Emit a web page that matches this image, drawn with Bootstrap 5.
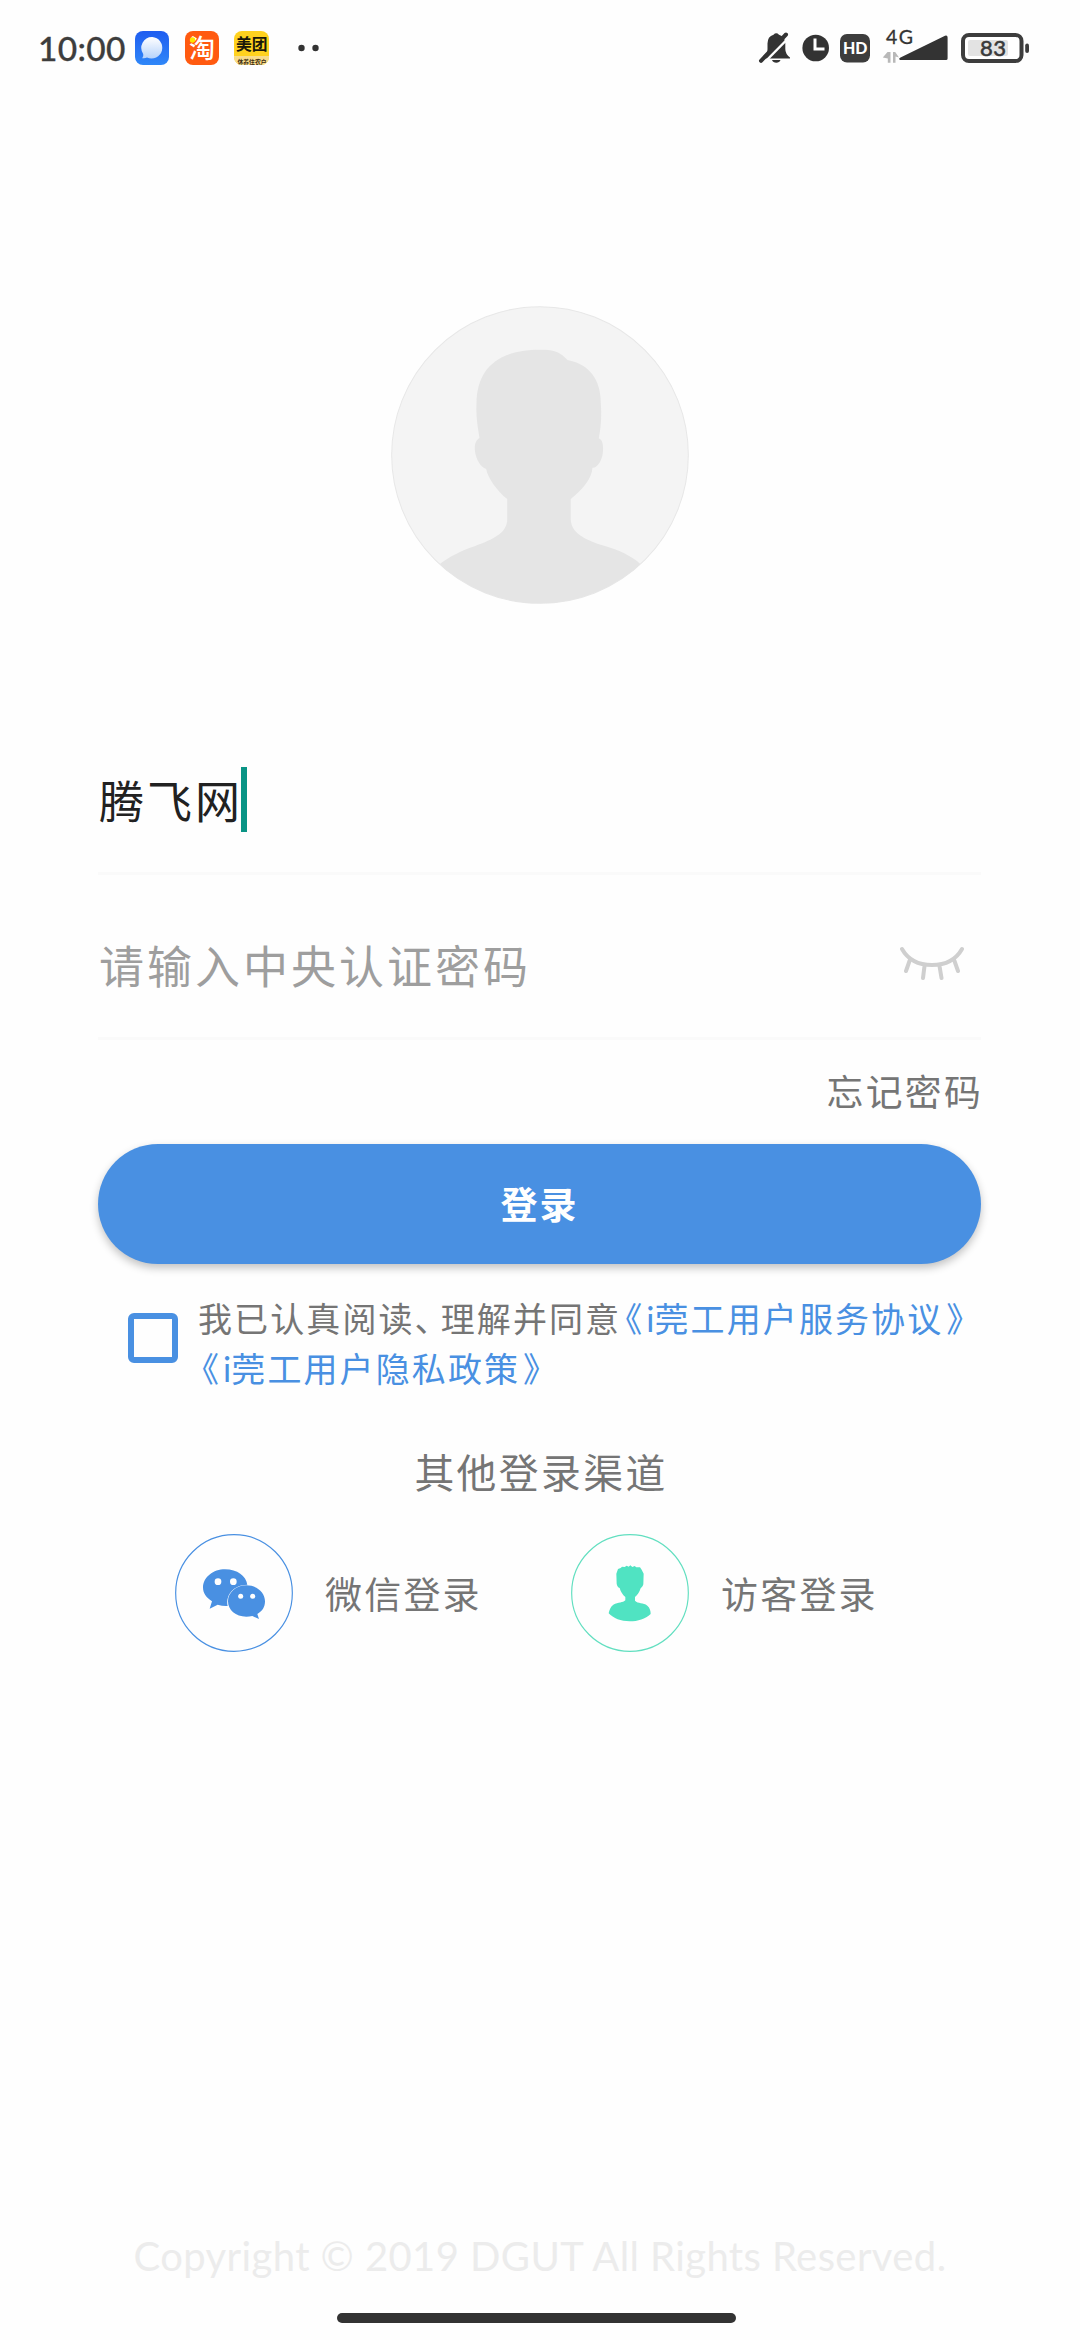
<!DOCTYPE html>
<html lang="zh-CN">
<head>
<meta charset="utf-8">
<meta name="viewport" content="width=device-width, initial-scale=1">
<title>登录</title>
<link rel="stylesheet" href="https://cdn.jsdelivr.net/npm/bootstrap@5.3.0/dist/css/bootstrap.min.css">
<style>
  html, body { height: 100%; }
  body { background: #fefefe; color: #757575; font-family: "Noto Sans CJK SC", sans-serif; overflow: hidden; }
  svg { display: block; flex: none; }
  svg text { font-family: Lato, "Noto Sans CJK SC", sans-serif; }
  .screen { width: 1080px; height: 2340px; }
  .status { height: 96px; padding: 0 51px 0 38px; }
  .clock-time { font: 500 33.5px/44px Lato, sans-serif; width: 97px; color: #3d3d3d; letter-spacing: .3px; -webkit-text-stroke: .3px #3d3d3d; white-space: nowrap; }
  .app-icons { gap: 15.5px; }
  .body-col { width: 883px; margin: 0 99px 0 98px; }
  .portrait { margin: 210px auto 0; width: 298px; }
  .field { height: 165px; border-bottom: 3px solid #fafafa; font-size: 45px; letter-spacing: 3px; padding: 17px 0 0 1px; }
  .field-user { margin-top: 106px; color: #212121; }
  .caret { width: 6px; height: 65px; background: #0a9485; margin-left: -2px; }
  .field input { font-size: 45px; letter-spacing: 3px; line-height: 60px; }
  .field input::placeholder { color: #9e9e9e; opacity: 1; }
  .eye { margin: 0 2px 9px 0; }
  .forgot { height: 104px; font-size: 36.8px; letter-spacing: 2.3px; color: #757575; margin-right: -2px; line-height: 100px; }
  .btn-login { height: 120px; background: #4990e2; color: #fff; font-size: 37px; letter-spacing: 2px; box-shadow: 0 4px 9px rgba(0,0,0,.24); }
  .btn-login:hover { background: #4990e2; color: #fff; }
  .agree { padding: 29px 0 0 30px; height: 134px; }
  .agree .form-check-input { width: 50px; height: 50px; margin: 20px 20px 0 0; border: 6px solid #4990e2; border-radius: 6px; background: transparent; flex: none; }
  .terms { font-size: 34px; letter-spacing: 2.1px; line-height: 49px; white-space: nowrap; }
  .terms a { color: #4990e2; text-decoration: none; }
  .punct { font-feature-settings: "halt"; }
  .comma { margin-right: 7px; }
  .open-q { margin: 0 2px 0 4px; }
  .close-q { margin-left: 3px; }
  .latin-i { font-family: Lato, sans-serif; letter-spacing: 0; }
  .others { font-size: 39.8px; letter-spacing: 2.4px; line-height: 60px; margin: 43px -3px 0 0; }
  .channels { margin-top: 33px; gap: 91px; padding-left: 77px; }
  .channel { gap: 32px; font-size: 37px; letter-spacing: 2.2px; line-height: 60px; width: 305px; white-space: nowrap; }
  .copyright { font: 400 40px/48px Lato, sans-serif; color: #ececec; white-space: nowrap; letter-spacing: .4px; }
  .home-bar { width: 399px; height: 10px; border-radius: 5px; background: #333; margin: 33px 0 17px 337px; }
</style>
</head>
<body>
<div class="screen d-flex flex-column">
  <header class="status d-flex align-items-center justify-content-between">
    <div class="d-flex align-items-center">
      <div class="clock-time">10:00</div>
      <div class="app-icons d-flex align-items-center">
        <svg width="34" height="34" viewBox="0 0 34 34">
          <defs>
            <linearGradient id="blue" x2="0" y2="1"><stop stop-color="#1f5df0"/><stop offset="1" stop-color="#2f87f8"/></linearGradient>
            <linearGradient id="bubble" x2="0" y2="1"><stop stop-color="#fff"/><stop offset="1" stop-color="#b5d2fb"/></linearGradient>
          </defs>
          <rect width="34" height="34" rx="8" fill="url(#blue)"/>
          <path d="M17.2 6A10.8 10.8 0 1 1 12 26.6Q10 27.6 7.2 27.2Q8.8 25.400 8.200 22.900A10.800 10.800 0 0 1 17.200 6Z" fill="url(#bubble)"/>
        </svg>
        <svg width="34" height="34" viewBox="0 0 34 34">
          <rect width="34" height="34" rx="8" fill="#ff5a10"/>
          <text x="4" y="26.500" font-size="26" font-weight="500" fill="#fff">淘</text>
          <circle cx="7.500" cy="9" r="2.700" fill="#ffe600"/>
        </svg>
        <svg width="35" height="34" viewBox="0 0 35 34">
          <clipPath id="tile"><rect width="35" height="34" rx="8"/></clipPath>
          <g clip-path="url(#tile)">
            <rect width="35" height="34" fill="#ffd21f"/>
            <rect y="25" width="35" height="9" fill="#f8dc8a"/>
            <text x="2" y="19" font-size="15.800" font-weight="600" fill="#1b1809">美团</text>
            <text x="3.500" y="32.500" font-size="5.800" font-weight="700" fill="#3a2a10">休养住农户</text>
          </g>
        </svg>
      </div>
      <svg class="ms-4" width="30" height="10" viewBox="0 0 30 10"><g fill="#333"><circle cx="8.500" cy="5" r="3.200"/><circle cx="22.500" cy="5" r="3.200"/></g></svg>
    </div>
    <svg width="272" height="64" viewBox="757 16 272 64" fill="#333">
      <path d="M765 56.500Q767.500 54 767.500 49V43.500Q767.500 36.500 773.500 34.700Q776.200 32 779 34.700Q785 36.500 785.300 43.500V49Q785.300 54 790 57.500V58.500H764ZM772 60H780.500Q779.500 62.800 776.300 62.800T772 60Z"/>
      <path d="M762.500 64.500L789.500 37" stroke="#fefefe" stroke-width="2.400"/>
      <path d="M761 60.800L786 34.500" stroke="#333" stroke-width="4" stroke-linecap="round"/>
      <circle cx="815.700" cy="48" r="13.300"/><path d="M815 38.500V49H824.500" fill="none" stroke="#fff" stroke-width="3"/>
      <rect x="840" y="34" width="30" height="28.500" rx="7" fill="#3d3d3d"/>
      <text x="843" y="54.200" font-size="17" font-weight="900" fill="#fff" textLength="24.500" lengthAdjust="spacingAndGlyphs">HD</text>
      <text x="886" y="43.500" font-size="19.500" textLength="27" stroke="#333" stroke-width=".3">4G</text>
      <path d="M899.500 59.500Q898.500 58.600 900 57.700L945 35.800Q947.600 35 947.600 37.500V58.500Q947.600 60 946 60H900Z"/>
      <path d="M887.500 52H890.500V62.800H887.800V58.500L882.800 57.500ZM893 62.800V52H895.200L899 57.500L895.500 56.500V62.800Z" fill="#b8b8b8"/>
      <rect x="963" y="35" width="58.500" height="26" rx="6" fill="#fff" stroke="#3d3d3d" stroke-width="4"/>
      <rect x="968" y="40" width="40" height="16" rx="2" fill="#e3e3e3"/>
      <rect x="1025.200" y="43.500" width="3.800" height="9.500" rx="1.900" fill="#3d3d3d"/>
      <text x="980" y="56" font-size="22" textLength="26" fill="#3a3a3a" stroke="#3a3a3a" stroke-width=".6">83</text>
    </svg>
  </header>

  <main class="body-col">
    <div class="portrait">
      <svg width="298" height="298" viewBox="62 50 892 892">
        <clipPath id="round"><circle cx="508" cy="496" r="444"/></clipPath>
        <circle cx="508" cy="496" r="444" fill="#f4f4f4" stroke="#e7e7e7" stroke-width="3"/>
        <path clip-path="url(#round)" fill="#e5e5e5" d="M518 181C548 180 572 190 590 212C656 224 690 272 690 340C693 384 690 415 684 446C697 452 698 470 696 490C693 514 680 535 665 534C664 566 634 600 600 628V690C602 730 645 752 700 768C744 780 784 800 808 822L800 960H210V821C238 800 274 782 310 770C370 748 408 730 410 690V628C380 605 350 562 347 538C330 532 316 510 313 482C312 462 316 452 327 445C320 405 316 376 318 340C320 240 378 178 518 181Z"/>
      </svg>
    </div>

    <form>
      <div class="field field-user d-flex align-items-center"><span>腾飞网</span><span class="caret"></span></div>
      <div class="field d-flex align-items-center">
        <input type="text" class="form-control border-0 p-0 bg-transparent shadow-none" placeholder="请输入中央认证密码" aria-label="请输入中央认证密码">
        <svg class="eye" width="80" height="40" viewBox="0 0 80 40" fill="none" stroke="#cfcfcf" stroke-width="4" stroke-linecap="round">
          <path d="M3 9Q12 25 33 25Q54 25 63 9M10.500 21L7 31M25.500 26L24 38M40.500 26L42.500 38M55.500 21L59 31"/>
        </svg>
      </div>
      <div class="forgot text-end">忘记密码</div>
      <button type="button" class="btn btn-login w-100 rounded-pill border-0 fw-bold p-0">登录</button>
      <div class="agree d-flex align-items-start">
        <input class="form-check-input" type="checkbox" aria-label="同意">
        <div class="terms">我已认真阅读<span class="punct comma">、</span>理解并同意<a href="#"><span class="punct open-q">《</span><span class="latin-i">i</span>莞工用户服务协议<span class="punct close-q">》</span></a><br><a href="#"><span class="punct open-q">《</span><span class="latin-i">i</span>莞工用户隐私政策<span class="punct close-q">》</span></a></div>
      </div>
    </form>

    <div class="others text-center">其他登录渠道</div>
    <div class="channels d-flex">
      <div class="channel d-flex align-items-center">
        <svg width="118" height="118" viewBox="75 311 354 354">
          <circle cx="252" cy="488" r="175" fill="none" stroke="#4990e2" stroke-width="3.500"/>
          <path fill="#4990e2" d="M225 417C262 417 288 437 292 463C252 464 226 492 233 527Q218 528 203 523L179 535L186 513C168 502 159 489 159 471C160 440 190 417 225 417Z"/>
          <path fill="#4990e2" d="M289 465C321 465 345 487 345 513C345 530 337 543 322 551L327 566L307 557C266 566 234 544 234 513C234 487 258 465 289 465Z"/>
          <g fill="#fefefe"><circle cx="204" cy="454" r="10"/><circle cx="250" cy="454" r="10"/><circle cx="272" cy="498" r="7.500"/><circle cx="308" cy="498" r="7.500"/></g>
        </svg>
        <span>微信登录</span>
      </div>
      <div class="channel d-flex align-items-center">
        <svg width="118" height="118" viewBox="93 311 354 354">
          <circle cx="270" cy="488" r="175" fill="none" stroke="#62dfc0" stroke-width="3.500"/>
          <path fill="#50e3c2" d="M229 430L234 416L242 413L246 409L254 410L260 406L266 409L271 405L277 410L284 407L289 411L300 411L305 418L311 430L310 462C308 470 305 470 302 474C298 486 293 494 285 500V511C294 521 310 515 322 526C330 533 332 542 332 551C316 566 294 573 269 573C243 573 220 564 206 549C208 539 211 530 220 523C235 515 249 518 256 510V500C248 493 242 485 239 473C234 471 231 467 230 460Z"/>
        </svg>
        <span>访客登录</span>
      </div>
    </div>
  </main>

  <footer class="mt-auto">
    <div class="copyright text-center">Copyright © 2019 DGUT All Rights Reserved.</div>
    <div class="home-bar"></div>
  </footer>
</div>
<script src="https://cdn.jsdelivr.net/npm/bootstrap@5.3.0/dist/js/bootstrap.bundle.min.js"></script>
</body>
</html>
